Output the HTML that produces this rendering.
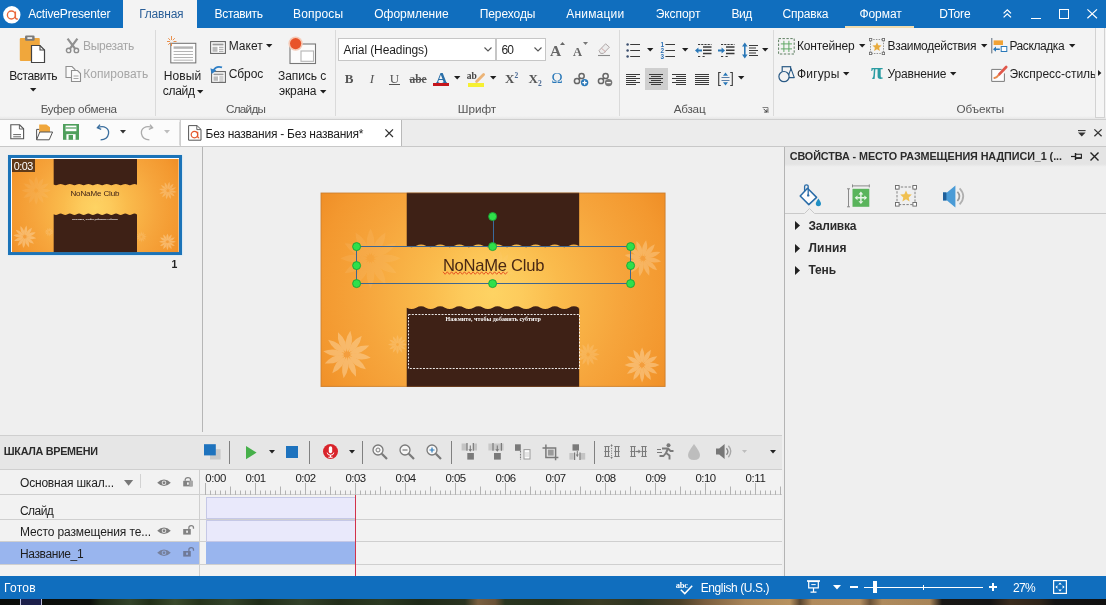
<!DOCTYPE html>
<html lang="ru"><head><meta charset="utf-8"><title>ActivePresenter</title>
<style>
html,body{margin:0;padding:0;}
body{width:1106px;height:605px;overflow:hidden;position:relative;background:#efefef;font-family:"Liberation Sans",sans-serif;font-size:12px;}
.r{position:absolute;}
.t{position:absolute;white-space:nowrap;line-height:normal;}
.i{position:absolute;overflow:visible;}
#w{position:absolute;left:0;top:0;width:1106px;height:605px;will-change:transform;}
</style></head><body><div id="w">

<div class="r" style="left:0px;top:0px;width:1106px;height:28px;background:#106ebe;"></div>
<svg class="i" style="left:2.5px;top:5.5px;" width="18" height="18" viewBox="0 0 18 18"><circle cx="8.8" cy="8.8" r="8.7" fill="#fff"/><circle cx="8.4" cy="9" r="4" fill="none" stroke="#e9683c" stroke-width="1.35"/><path d="M12.4 5.4V11.2Q12.4 13.2 14.8 13" fill="none" stroke="#e9683c" stroke-width="1.35"/></svg>
<span class="t" style="left:28.20px;top:7.00px;font-size:12px;color:#fff;letter-spacing:-0.174px;">ActivePresenter</span>
<div class="r" style="left:123px;top:0px;width:74px;height:28px;background:#f3f3f3;"></div>
<span class="t" style="left:139.20px;top:7.00px;font-size:12px;color:#2b5f98;letter-spacing:-0.211px;">Главная</span>
<span class="t" style="left:214.60px;top:7.00px;font-size:12px;color:#fff;letter-spacing:-0.358px;">Вставить</span>
<span class="t" style="left:293.00px;top:7.00px;font-size:12px;color:#fff;letter-spacing:0.150px;">Вопросы</span>
<span class="t" style="left:374.20px;top:7.00px;font-size:12px;color:#fff;letter-spacing:-0.009px;">Оформление</span>
<span class="t" style="left:479.70px;top:7.00px;font-size:12px;color:#fff;letter-spacing:-0.073px;">Переходы</span>
<span class="t" style="left:566.20px;top:7.00px;font-size:12px;color:#fff;letter-spacing:0.208px;">Анимации</span>
<span class="t" style="left:655.70px;top:7.00px;font-size:12px;color:#fff;letter-spacing:-0.056px;">Экспорт</span>
<span class="t" style="left:731.50px;top:7.00px;font-size:12px;color:#fff;letter-spacing:-0.437px;">Вид</span>
<span class="t" style="left:782.50px;top:7.00px;font-size:12px;color:#fff;letter-spacing:-0.196px;">Справка</span>
<span class="t" style="left:859.40px;top:7.00px;font-size:12px;color:#fff;letter-spacing:-0.038px;">Формат</span>
<span class="t" style="left:939.30px;top:7.00px;font-size:12px;color:#fff;letter-spacing:-0.182px;">DTore</span>
<div class="r" style="left:845px;top:26px;width:69px;height:2px;background:#f0dcae;"></div>
<svg class="i" style="left:1003px;top:9.3px;" width="9" height="9" viewBox="0 0 9 9"><path d="M0.6 4.4L4.3 0.8L8 4.4M0.6 8.4L4.3 4.8L8 8.4" fill="none" stroke="#fff" stroke-width="1.3"/></svg>
<div class="r" style="left:1031px;top:17.5px;width:10px;height:1.3px;background:#fff;"></div>
<div class="r" style="left:1058.6px;top:9.4px;width:8.2px;height:7.2px;background:transparent;border:1.2px solid #fff;box-sizing:content-box;"></div>
<svg class="i" style="left:1087px;top:9.4px;" width="10.4" height="9.6" viewBox="0 0 10.4 9.6"><path d="M0.4 0.4L10 9.2M10 0.4L0.4 9.2" stroke="#fff" stroke-width="1.2"/></svg>
<div class="r" style="left:0px;top:28px;width:1106px;height:92px;background:#f3f3f3;"></div>
<div class="r" style="left:0px;top:116px;width:1106px;height:3px;background:linear-gradient(#f3f3f3,#e6e6e6);"></div>
<div class="r" style="left:155px;top:30px;width:1px;height:86px;background:#dadada;"></div>
<div class="r" style="left:335px;top:30px;width:1px;height:86px;background:#dadada;"></div>
<div class="r" style="left:618.5px;top:30px;width:1px;height:86px;background:#dadada;"></div>
<div class="r" style="left:772.5px;top:30px;width:1px;height:86px;background:#dadada;"></div>
<span class="t" style="left:40.70px;top:102.00px;font-size:11.7px;color:#555;letter-spacing:-0.275px;">Буфер обмена</span>
<span class="t" style="left:226.00px;top:102.00px;font-size:11.7px;color:#555;letter-spacing:-0.726px;">Слайды</span>
<span class="t" style="left:457.70px;top:102.00px;font-size:11.7px;color:#555;letter-spacing:0.001px;">Шрифт</span>
<span class="t" style="left:673.70px;top:102.00px;font-size:11.7px;color:#555;letter-spacing:-0.224px;">Абзац</span>
<span class="t" style="left:956.60px;top:102.00px;font-size:11.7px;color:#555;letter-spacing:-0.093px;">Объекты</span>
<span class="t" style="left:9.20px;top:69.00px;font-size:12px;color:#1e1e1e;letter-spacing:-0.358px;">Вставить</span>
<svg class="i" style="left:29.8px;top:87.8px;" width="6.4" height="3.4" viewBox="0 0 6.4 3.4"><path d="M0 0H6.4L3.2 3.4Z" fill="#1e1e1e"/></svg>
<span class="t" style="left:83.00px;top:39.00px;font-size:12px;color:#a6a6a6;letter-spacing:-0.309px;">Вырезать</span>
<span class="t" style="left:83.20px;top:67.00px;font-size:12px;color:#a6a6a6;letter-spacing:0.039px;">Копировать</span>
<span class="t" style="left:163.70px;top:69.00px;font-size:12px;color:#1e1e1e;letter-spacing:0.131px;">Новый</span>
<span class="t" style="left:162.70px;top:84.00px;font-size:12px;color:#1e1e1e;letter-spacing:-0.276px;">слайд</span>
<svg class="i" style="left:196.8px;top:89.8px;" width="6.4" height="3.4" viewBox="0 0 6.4 3.4"><path d="M0 0H6.4L3.2 3.4Z" fill="#1e1e1e"/></svg>
<span class="t" style="left:228.70px;top:39.00px;font-size:12px;color:#1e1e1e;letter-spacing:0.007px;">Макет</span>
<svg class="i" style="left:265.8px;top:43.9px;" width="6.4" height="3.4" viewBox="0 0 6.4 3.4"><path d="M0 0H6.4L3.2 3.4Z" fill="#1e1e1e"/></svg>
<span class="t" style="left:228.70px;top:67.00px;font-size:12px;color:#1e1e1e;letter-spacing:-0.077px;">Сброс</span>
<span class="t" style="left:278.00px;top:69.00px;font-size:12px;color:#1e1e1e;letter-spacing:-0.064px;">Запись с</span>
<span class="t" style="left:279.00px;top:84.00px;font-size:12px;color:#1e1e1e;letter-spacing:-0.137px;">экрана</span>
<svg class="i" style="left:319.5px;top:89.8px;" width="6.4" height="3.4" viewBox="0 0 6.4 3.4"><path d="M0 0H6.4L3.2 3.4Z" fill="#1e1e1e"/></svg>
<svg class="i" style="left:18px;top:35px;" width="30" height="30" viewBox="0 0 30 30">
<rect x="1.8" y="3" width="20" height="23" rx="1" fill="#f0a73c"/>
<rect x="7" y="0.6" width="9.6" height="5.2" rx="1.2" fill="#7a7a7a"/>
<rect x="9.4" y="2.2" width="4.8" height="1.7" fill="#f3f3f3"/>
<path d="M13.5 10.5H22L26.5 15V27.5H13.5Z" fill="#fff" stroke="#444" stroke-width="1.2"/>
<path d="M22 10.5V15H26.5" fill="none" stroke="#444" stroke-width="1.1"/>
</svg>
<svg class="i" style="left:65px;top:38px;" width="15" height="16" viewBox="0 0 15 16">
<path d="M2.6 0.6L10.4 11.2M12.4 0.6L4.6 11.2" stroke="#909090" stroke-width="2.2" fill="none"/>
<circle cx="3.6" cy="12.4" r="2.2" fill="none" stroke="#8c8c8c" stroke-width="1.4"/>
<circle cx="11.4" cy="12.4" r="2.2" fill="none" stroke="#8c8c8c" stroke-width="1.4"/>
</svg>
<svg class="i" style="left:65px;top:65px;" width="17" height="18" viewBox="0 0 17 18">
<path d="M1 1.5H7L10 4.5V12.5H1Z" fill="#fafafa" stroke="#8f8f8f" stroke-width="1.1"/>
<path d="M6.5 5.5H12.5L15.5 8.5V16.5H6.5Z" fill="#fafafa" stroke="#8f8f8f" stroke-width="1.1"/>
<path d="M8.5 11H13.5M8.5 13.5H13.5" stroke="#a5a5a5" stroke-width="1"/>
</svg>
<svg class="i" style="left:166px;top:35px;" width="32" height="30" viewBox="0 0 32 30">
<rect x="4.8" y="8.3" width="25" height="19.6" fill="#fdfdfd" stroke="#6e6e6e" stroke-width="1"/>
<rect x="7.6" y="11.4" width="19.4" height="2.4" fill="#b4b4b4"/>
<path d="M7.6 16.5H27M7.6 19.5H27M7.6 22.5H27M7.6 25.2H27" stroke="#b4b4b4" stroke-width="1"/>
<path d="M5.5 1V5M5.5 8V11M1 6.5H4M7.5 6.5H10.5M2.3 3.2L4.2 5.2M8.8 3.2L6.8 5.2M2.3 9.8L4.2 7.8" stroke="#e8853a" stroke-width="0.9"/>
</svg>
<svg class="i" style="left:210px;top:41px;" width="16" height="13" viewBox="0 0 16 13">
<rect x="0.6" y="0.6" width="14.8" height="11.8" fill="#fff" stroke="#666" stroke-width="1.1"/>
<rect x="2.5" y="2.6" width="11" height="1.8" fill="#999"/>
<rect x="2.5" y="5.8" width="5" height="5" fill="#bbb"/>
<path d="M9 6.3H13.5M9 8.3H13.5M9 10.3H13.5" stroke="#999" stroke-width="0.9"/>
</svg>
<svg class="i" style="left:210px;top:66px;" width="16" height="17" viewBox="0 0 16 17">
<rect x="1.6" y="5.6" width="13.8" height="10.8" fill="#fff" stroke="#666" stroke-width="1.1"/>
<rect x="3.5" y="7.6" width="10" height="1.6" fill="#999"/>
<rect x="3.5" y="10.4" width="4.5" height="4.4" fill="#bbb"/>
<path d="M9.3 11H13.5M9.3 13H13.5M9.3 15H13.5" stroke="#999" stroke-width="0.9"/>
<path d="M12 1.4Q6 -0.4 3.6 4.4" fill="none" stroke="#2f7fc6" stroke-width="1.9"/>
<path d="M0.4 2.2L6.4 4.6L1.6 8Z" fill="#2f7fc6"/>
</svg>
<svg class="i" style="left:288px;top:36px;" width="30" height="30" viewBox="0 0 30 30">
<rect x="2" y="8" width="25.5" height="19.5" fill="#fbfbfb" stroke="#777" stroke-width="1.1"/>
<rect x="13" y="15" width="12.5" height="10.3" fill="#fff" stroke="#b5b5b5" stroke-width="1.1"/>
<circle cx="7.6" cy="7.6" r="7.2" fill="#f6c9b5"/>
<circle cx="7.6" cy="7.6" r="5.6" fill="#e8542a"/>
</svg>
<div class="r" style="left:338px;top:38px;width:157.5px;height:22.8px;background:#fff;border:1px solid #c6c6c6;box-sizing:border-box;"></div>
<div class="r" style="left:496.3px;top:38px;width:49.8px;height:22.8px;background:#fff;border:1px solid #c6c6c6;box-sizing:border-box;"></div>
<span class="t" style="left:343.50px;top:43.00px;font-size:12px;color:#1e1e1e;letter-spacing:-0.102px;">Arial (Headings)</span>
<span class="t" style="left:501.50px;top:43.00px;font-size:12px;color:#1e1e1e;letter-spacing:-0.824px;">60</span>
<svg class="i" style="left:483.5px;top:47px;" width="8" height="5" viewBox="0 0 8 5"><path d="M0.5 0.5L4 4L7.5 0.5" fill="none" stroke="#555" stroke-width="1.1"/></svg>
<svg class="i" style="left:533.5px;top:47px;" width="8" height="5" viewBox="0 0 8 5"><path d="M0.5 0.5L4 4L7.5 0.5" fill="none" stroke="#555" stroke-width="1.1"/></svg>
<span class="t" style="left:344.76px;top:71.00px;font-size:13px;color:#555;letter-spacing:0.000px;font-weight:700;font-family:'Liberation Serif',serif;">B</span>
<span class="t" style="left:369.74px;top:71.00px;font-size:13px;color:#555;letter-spacing:0.000px;font-family:'Liberation Serif',serif;font-style:italic;">I</span>
<span class="t" style="left:389.81px;top:71.00px;font-size:13px;color:#555;letter-spacing:0.000px;font-family:'Liberation Serif',serif;">U</span>
<div class="r" style="left:389.3px;top:83.8px;width:10.5px;height:1px;background:#555;"></div>
<span class="t" style="left:409.38px;top:73.00px;font-size:11.5px;color:#555;letter-spacing:0.000px;font-weight:700;font-family:'Liberation Serif',serif;text-decoration:line-through;text-decoration-thickness:1px;">abe</span>
<span class="t" style="left:436.00px;top:68.50px;font-size:15.5px;color:#2a6fa8;letter-spacing:0.000px;font-weight:700;font-family:'Liberation Serif',serif;">A</span>
<div class="r" style="left:433px;top:83.2px;width:15.8px;height:3.2px;background:#c4161c;"></div>
<svg class="i" style="left:454.40000000000003px;top:76.3px;" width="6.4" height="3.4" viewBox="0 0 6.4 3.4"><path d="M0 0H6.4L3.2 3.4Z" fill="#1e1e1e"/></svg>
<span class="t" style="left:466.78px;top:70.50px;font-size:9.5px;color:#444;letter-spacing:0.000px;font-weight:700;font-family:'Liberation Serif',serif;">ab</span>
<div class="r" style="left:468px;top:83.2px;width:16px;height:3.6px;background:#f6f032;"></div>
<svg class="i" style="left:474.5px;top:72.5px;" width="10" height="10" viewBox="0 0 10 10"><path d="M1.6 8.4L8.6 1.4" stroke="#ecb477" stroke-width="2.8" stroke-linecap="round"/></svg>
<svg class="i" style="left:489.8px;top:76.3px;" width="6.4" height="3.4" viewBox="0 0 6.4 3.4"><path d="M0 0H6.4L3.2 3.4Z" fill="#1e1e1e"/></svg>
<span class="t" style="left:505.01px;top:71.00px;font-size:13px;color:#555;letter-spacing:0.000px;font-weight:700;font-family:'Liberation Serif',serif;">X</span>
<span class="t" style="left:514.62px;top:70.80px;font-size:7.5px;color:#4a6a95;letter-spacing:0.000px;font-weight:700;font-family:'Liberation Serif',serif;">2</span>
<span class="t" style="left:528.51px;top:71.00px;font-size:13px;color:#555;letter-spacing:0.000px;font-weight:700;font-family:'Liberation Serif',serif;">X</span>
<span class="t" style="left:537.92px;top:79.00px;font-size:7.5px;color:#4a6a95;letter-spacing:0.000px;font-weight:700;font-family:'Liberation Serif',serif;">2</span>
<span class="t" style="left:551.43px;top:70.00px;font-size:15px;color:#2a78b8;letter-spacing:0.000px;font-family:'Liberation Serif',serif;">Ω</span>
<span class="t" style="left:550.10px;top:41.70px;font-size:15.5px;color:#666;letter-spacing:0.000px;font-weight:700;font-family:'Liberation Serif',serif;">A</span>
<svg class="i" style="left:560px;top:41.5px;" width="5" height="3" viewBox="0 0 5 3"><path d="M0 3L2.5 0L5 3Z" fill="#666"/></svg>
<span class="t" style="left:572.89px;top:44.70px;font-size:12.5px;color:#666;letter-spacing:0.000px;font-weight:700;font-family:'Liberation Serif',serif;">A</span>
<svg class="i" style="left:582.5px;top:41.8px;" width="5" height="3" viewBox="0 0 5 3"><path d="M0 0L2.5 3L5 0Z" fill="#777"/></svg>
<svg class="i" style="left:597px;top:42.5px;" width="14" height="14" viewBox="0 0 14 14"><path d="M2 7.6L8.6 0.8L12.4 4.2L6.4 10.4H3.6Z" fill="#ececec" stroke="#b0a8a8" stroke-width="1"/><path d="M4.4 5.2L8.8 9" stroke="#cfa8a8" stroke-width="1"/><path d="M1 12.5H13" stroke="#8a8a8a" stroke-width="1.1"/></svg>
<svg class="i" style="left:573px;top:71.5px;" width="16" height="15" viewBox="0 0 16 15">
<circle cx="4" cy="9" r="2.6" fill="none" stroke="#666" stroke-width="1.5"/>
<circle cx="8.6" cy="4" r="2.6" fill="none" stroke="#666" stroke-width="1.5"/>
<path d="M5.5 7.5L7.2 5.6" stroke="#666" stroke-width="1.5"/>
<circle cx="11.6" cy="10.6" r="3.7" fill="#2a78b8"/>
<path d="M9.4 10.6H13.8M11.6 8.4V12.8" stroke="#fff" stroke-width="1.3"/></svg>
<svg class="i" style="left:597px;top:71.5px;" width="16" height="15" viewBox="0 0 16 15">
<circle cx="4" cy="9" r="2.6" fill="none" stroke="#666" stroke-width="1.5"/>
<circle cx="8.6" cy="4" r="2.6" fill="none" stroke="#666" stroke-width="1.5"/>
<path d="M5.5 7.5L7.2 5.6" stroke="#666" stroke-width="1.5"/>
<circle cx="11.6" cy="10.6" r="3.7" fill="#777"/>
<path d="M9.4 10.6H13.8" stroke="#fff" stroke-width="1.3"/></svg>
<svg class="i" style="left:626px;top:42px;" width="15" height="17" viewBox="0 0 15 17"><circle cx="1.6" cy="2.5" r="1.25" fill="#3c4f6e"/><circle cx="1.6" cy="8.5" r="1.25" fill="#3c4f6e"/><circle cx="1.6" cy="14.5" r="1.25" fill="#3c4f6e"/>
<path d="M4.2 2.5H14M4.2 8.5H14M4.2 14.5H14" stroke="#3a3a3a" stroke-width="1"/></svg>
<svg class="i" style="left:646.8px;top:47.8px;" width="6.4" height="3.4" viewBox="0 0 6.4 3.4"><path d="M0 0H6.4L3.2 3.4Z" fill="#1e1e1e"/></svg>
<svg class="i" style="left:660px;top:42px;" width="16" height="17" viewBox="0 0 16 17"><path d="M5.4 2.5H15M5.4 8.5H15M5.4 14.5H15" stroke="#3a3a3a" stroke-width="1"/>
<text x="0.6" y="4.8" font-size="6.4" font-weight="700" fill="#2a6fb5" font-family="Liberation Sans,sans-serif">1</text>
<text x="0.6" y="10.8" font-size="6.4" font-weight="700" fill="#2a6fb5" font-family="Liberation Sans,sans-serif">2</text>
<text x="0.6" y="16.8" font-size="6.4" font-weight="700" fill="#2a6fb5" font-family="Liberation Sans,sans-serif">3</text></svg>
<svg class="i" style="left:681.8px;top:47.8px;" width="6.4" height="3.4" viewBox="0 0 6.4 3.4"><path d="M0 0H6.4L3.2 3.4Z" fill="#1e1e1e"/></svg>
<svg class="i" style="left:694.5px;top:42px;" width="17" height="17" viewBox="0 0 17 17"><path d="M3 2.5H16.5M3 14.5H6M7.5 14.5H10.5" stroke="#3a3a3a" stroke-width="1" stroke-dasharray="2.2 1"/>
<path d="M8 5H16.5M8 8.2H16.5M8 11.4H16.5" stroke="#3a3a3a" stroke-width="1.5"/>
<path d="M0 8.5L3.4 5.5V7.6H7V9.4H3.4V11.5Z" fill="#2a78b8"/></svg>
<svg class="i" style="left:718px;top:42px;" width="17" height="17" viewBox="0 0 17 17"><path d="M3 2.5H16.5M3 14.5H6M7.5 14.5H10.5" stroke="#3a3a3a" stroke-width="1" stroke-dasharray="2.2 1"/>
<path d="M8 5H16.5M8 8.2H16.5M8 11.4H16.5" stroke="#3a3a3a" stroke-width="1.5"/>
<path d="M7 8.5L3.6 5.5V7.6H0V9.4H3.6V11.5Z" fill="#2a78b8"/></svg>
<svg class="i" style="left:742px;top:42px;" width="17" height="17" viewBox="0 0 17 17"><path d="M7 3.5H16M7 6H14M7 8.5H16M7 11H14M7 13.5H16" stroke="#3a3a3a" stroke-width="1"/>
<path d="M2.8 3V14" stroke="#2a78b8" stroke-width="1.6"/><path d="M0 4.4L2.8 0.4L5.6 4.4ZM0 12.6L2.8 16.6L5.6 12.6Z" fill="#2a78b8"/></svg>
<svg class="i" style="left:761.8px;top:47.8px;" width="6.4" height="3.4" viewBox="0 0 6.4 3.4"><path d="M0 0H6.4L3.2 3.4Z" fill="#1e1e1e"/></svg>
<div class="r" style="left:645px;top:68px;width:23px;height:22px;background:#cfcfcf;"></div>
<svg class="i" style="left:626px;top:74px;" width="14" height="12" viewBox="0 0 14 12"><path d="M0 0.50H14M0 2.50H10M0 4.50H14M0 6.50H10M0 8.50H14M0 10.50H10" stroke="#3a3a3a" stroke-width="1"/></svg>
<svg class="i" style="left:649px;top:74px;" width="14" height="12" viewBox="0 0 14 12"><path d="M0 0.50H14M2 2.50H12M0 4.50H14M2 6.50H12M0 8.50H14M2 10.50H12" stroke="#3a3a3a" stroke-width="1"/></svg>
<svg class="i" style="left:672px;top:74px;" width="14" height="12" viewBox="0 0 14 12"><path d="M0 0.50H14M4 2.50H14M0 4.50H14M4 6.50H14M0 8.50H14M4 10.50H14" stroke="#3a3a3a" stroke-width="1"/></svg>
<svg class="i" style="left:695px;top:74px;" width="14" height="12" viewBox="0 0 14 12"><path d="M0 0.50H14M0 2.50H14M0 4.50H14M0 6.50H14M0 8.50H14M0 10.50H14" stroke="#3a3a3a" stroke-width="1"/></svg>
<svg class="i" style="left:718px;top:71px;" width="15" height="16" viewBox="0 0 15 16"><path d="M2.8 1.5H0.7V14.5H2.8M12.2 1.5H14.3V14.5H12.2" fill="none" stroke="#3a3a3a" stroke-width="1.1"/>
<path d="M3.5 6.5H11.5M3.5 9.5H11.5" stroke="#5a7fa8" stroke-width="1"/>
<path d="M5 4.8L7.5 1.6L10 4.8ZM5 11.2L7.5 14.4L10 11.2Z" fill="#2a78b8"/></svg>
<svg class="i" style="left:738.0999999999999px;top:76.3px;" width="6.4" height="3.4" viewBox="0 0 6.4 3.4"><path d="M0 0H6.4L3.2 3.4Z" fill="#1e1e1e"/></svg>
<svg class="i" style="left:761.5px;top:106.5px;" width="6.5" height="6.5" viewBox="0 0 6.5 6.5"><path d="M0.5 0.5H6V6" fill="none" stroke="#777" stroke-width="0.9"/><path d="M1.6 1.8L4.8 5M4.9 2.4V5.1H2.2" fill="none" stroke="#333" stroke-width="0.9"/></svg>
<span class="t" style="left:797.00px;top:39.00px;font-size:12px;color:#1e1e1e;letter-spacing:-0.156px;">Контейнер</span>
<svg class="i" style="left:859.0999999999999px;top:43.9px;" width="6.4" height="3.4" viewBox="0 0 6.4 3.4"><path d="M0 0H6.4L3.2 3.4Z" fill="#1e1e1e"/></svg>
<span class="t" style="left:887.50px;top:39.00px;font-size:12px;color:#1e1e1e;letter-spacing:-0.307px;">Взаимодействия</span>
<svg class="i" style="left:980.5999999999999px;top:43.9px;" width="6.4" height="3.4" viewBox="0 0 6.4 3.4"><path d="M0 0H6.4L3.2 3.4Z" fill="#1e1e1e"/></svg>
<span class="t" style="left:1009.40px;top:39.00px;font-size:12px;color:#1e1e1e;letter-spacing:-0.415px;">Раскладка</span>
<svg class="i" style="left:1068.5px;top:43.9px;" width="6.4" height="3.4" viewBox="0 0 6.4 3.4"><path d="M0 0H6.4L3.2 3.4Z" fill="#1e1e1e"/></svg>
<span class="t" style="left:797.00px;top:67.00px;font-size:12px;color:#1e1e1e;letter-spacing:0.189px;">Фигуры</span>
<svg class="i" style="left:843.0999999999999px;top:71.8px;" width="6.4" height="3.4" viewBox="0 0 6.4 3.4"><path d="M0 0H6.4L3.2 3.4Z" fill="#1e1e1e"/></svg>
<span class="t" style="left:887.50px;top:67.00px;font-size:12px;color:#1e1e1e;letter-spacing:-0.157px;">Уравнение</span>
<svg class="i" style="left:949.8px;top:71.8px;" width="6.4" height="3.4" viewBox="0 0 6.4 3.4"><path d="M0 0H6.4L3.2 3.4Z" fill="#1e1e1e"/></svg>
<span class="t" style="left:1009.40px;top:67.00px;font-size:12px;color:#1e1e1e;letter-spacing:-0.029px;">Экспресс-стиль</span>
<div class="r" style="left:1094.5px;top:28px;width:10.5px;height:90px;background:#f5f5f5;border:1px solid #d2d2d2;border-top:none;box-sizing:border-box;"></div>
<svg class="i" style="left:1098px;top:70px;" width="3.4" height="6" viewBox="0 0 3.4 6"><path d="M0 0L3.4 3L0 6Z" fill="#222"/></svg>
<svg class="i" style="left:778px;top:38px;" width="17" height="17" viewBox="0 0 17 17"><rect x="0.6" y="0.6" width="15.6" height="15.4" fill="none" stroke="#5f7f62" stroke-width="1" stroke-dasharray="2.4 1.5"/>
<path d="M5.9 2.8V14M10.9 2.8V14M2.8 5.9H14M2.8 10.9H14" stroke="#62a866" stroke-width="1"/></svg>
<svg class="i" style="left:869px;top:38px;" width="16" height="17" viewBox="0 0 16 17"><rect x="1.5" y="1.5" width="13" height="14" fill="none" stroke="#888" stroke-width="0.9" stroke-dasharray="1.5 1.2"/>
<path d="M8 4.2L9.3 7.3L12.6 7.6L10.1 9.8L10.9 13L8 11.3L5.1 13L5.9 9.8L3.4 7.6L6.7 7.3Z" fill="#e8ab3e"/>
<g fill="#fff" stroke="#666" stroke-width="0.8"><rect x="0.4" y="0.4" width="2.4" height="2.4"/><rect x="13.2" y="0.4" width="2.4" height="2.4"/><rect x="0.4" y="14.2" width="2.4" height="2.4"/><rect x="13.2" y="14.2" width="2.4" height="2.4"/></g></svg>
<svg class="i" style="left:991px;top:38px;" width="17" height="17" viewBox="0 0 17 17"><path d="M0.8 0V15.4" stroke="#5a6a7a" stroke-width="1"/>
<rect x="2.6" y="2.4" width="9.4" height="4.6" fill="#f0a235"/>
<rect x="10.2" y="8.5" width="5.6" height="5" fill="#fdfdfd" stroke="#2a78b8" stroke-width="1"/>
<path d="M2 11.2L5 8.6V10.5H8.8V11.9H5V13.8Z" fill="#2a78b8"/></svg>
<svg class="i" style="left:777.5px;top:66px;" width="17" height="16" viewBox="0 0 17 16"><rect x="4.2" y="0.7" width="8.4" height="7.6" fill="none" stroke="#2a5a85" stroke-width="1.2"/>
<path d="M13 2.6L16.3 11.6H9.6Z" fill="#f3f3f3" stroke="#2a5a85" stroke-width="1.1" stroke-linejoin="round"/>
<circle cx="6" cy="10.6" r="5.1" fill="#f3f3f3" stroke="#2a5a85" stroke-width="1.2"/></svg>
<span class="t" style="left:870.90px;top:58.40px;font-size:23.5px;color:#2a9ca2;letter-spacing:0.000px;font-weight:700;font-family:'Liberation Serif',serif;transform:scaleX(0.92);transform-origin:0 0;">π</span>
<svg class="i" style="left:991px;top:65px;" width="17" height="18" viewBox="0 0 17 18"><path d="M10.6 4.4H0.7V16.4H13.4V8.4" fill="#fdfdfd" stroke="#7a7a7a" stroke-width="1"/>
<path d="M15.2 2L8.2 9.4" stroke="#e0574a" stroke-width="2.7" stroke-linecap="round"/>
<path d="M7.4 10.3Q6 12.6 3.4 12.9" stroke="#e98a4e" stroke-width="2" stroke-linecap="round" fill="none"/></svg>
<div class="r" style="left:0px;top:120px;width:1106px;height:26px;background:#ececec;"></div>
<div class="r" style="left:0px;top:120px;width:179px;height:26px;background:#fbfbfb;"></div>
<div class="r" style="left:0px;top:119px;width:1106px;height:1px;background:#cfcfcf;"></div>
<div class="r" style="left:0px;top:146px;width:1106px;height:1px;background:#c8c8c8;"></div>
<div class="r" style="left:178.5px;top:122px;width:1px;height:23px;background:#d8d8d8;"></div>
<div class="r" style="left:180px;top:120px;width:222px;height:26px;background:#fff;border-left:1px solid #cfcfcf;border-right:1px solid #b9b9b9;box-sizing:border-box;"></div>
<svg class="i" style="left:9.5px;top:124px;" width="15" height="16" viewBox="0 0 15 16"><path d="M0.8 0.8H9.6L13.6 4.8V14.8H0.8Z" fill="#fff" stroke="#555" stroke-width="1.1"/><path d="M9.4 1V5H13.4" fill="none" stroke="#555" stroke-width="0.9"/><path d="M3.2 10.6H11M3.2 12.8H11" stroke="#666" stroke-width="1"/></svg>
<svg class="i" style="left:35.5px;top:123.5px;" width="17" height="16.5" viewBox="0 0 17 16.5"><path d="M3.2 0.4H10.4L14 3.2V9H3.2Z" fill="#f0a73c"/>
<path d="M0.6 15.8L3.8 8H16.6L13.2 15.8Z" fill="#fdfdfd" stroke="#555" stroke-width="1" stroke-linejoin="round"/>
<path d="M0.6 15.6V5.4H3.2" fill="none" stroke="#555" stroke-width="1"/></svg>
<svg class="i" style="left:63px;top:124px;" width="16" height="15.8" viewBox="0 0 16 15.8"><path d="M0 0H16V15.8H0Z" fill="#4f9f5c"/><rect x="2.6" y="1.6" width="10.8" height="5.6" fill="#fff"/><path d="M2.6 4H13.4" stroke="#4f9f5c" stroke-width="1.2"/><rect x="3.4" y="10.2" width="9.2" height="5.6" fill="#fff"/><rect x="5.6" y="11" width="4.4" height="4.8" fill="#4f9f5c"/></svg>
<svg class="i" style="left:96px;top:123.5px;" width="14" height="17" viewBox="0 0 14 17"><path d="M1.6 3.6C8.4 1 13.4 4.6 12.5 9.8C11.8 13.6 8.4 15.6 4.6 15.8" fill="none" stroke="#3a6e9e" stroke-width="1.3"/><path d="M4 0.6L1.4 3.8L5.2 5.4" fill="none" stroke="#3a6e9e" stroke-width="1.3"/></svg>
<svg class="i" style="left:120.2px;top:129.8px;" width="6" height="3.4" viewBox="0 0 6 3.4"><path d="M0 0H6L3.0 3.4Z" fill="#333"/></svg>
<svg class="i" style="left:140px;top:123.5px;" width="14" height="17" viewBox="0 0 14 17"><path d="M12.4 3.6C5.6 1 0.6 4.6 1.5 9.8C2.2 13.6 5.6 15.6 9.4 15.8" fill="none" stroke="#ababab" stroke-width="1.3"/><path d="M10 0.6L12.6 3.8L8.8 5.4" fill="none" stroke="#ababab" stroke-width="1.3"/></svg>
<svg class="i" style="left:164.4px;top:129.8px;" width="6" height="3.4" viewBox="0 0 6 3.4"><path d="M0 0H6L3.0 3.4Z" fill="#bdbdbd"/></svg>
<svg class="i" style="left:187.8px;top:124.8px;" width="14" height="16" viewBox="0 0 14 16"><path d="M0.6 0.6H9L13 4.4V15.2H0.6Z" fill="#fff" stroke="#555" stroke-width="1"/><path d="M8.8 0.8V4.6H12.8" fill="none" stroke="#555" stroke-width="0.9"/><circle cx="6.4" cy="9.6" r="3.2" fill="none" stroke="#e4572e" stroke-width="1.2"/><path d="M9.7 6.8V11.6Q9.7 13 11.2 13" fill="none" stroke="#e4572e" stroke-width="1.2"/></svg>
<span class="t" style="left:205.50px;top:126.50px;font-size:12px;color:#1e1e1e;letter-spacing:-0.239px;">Без названия - Без названия*</span>
<svg class="i" style="left:385px;top:128.8px;" width="8.4" height="8.4" viewBox="0 0 8.4 8.4"><path d="M0.4 0.4L8 8M8 0.4L0.4 8" stroke="#333" stroke-width="1.25"/></svg>
<svg class="i" style="left:1077.6px;top:129.6px;" width="7.6" height="6.6" viewBox="0 0 7.6 6.6"><path d="M0 0.6H7.6" stroke="#333" stroke-width="1.1"/><path d="M0 2.4H7.6L3.8 6.4Z" fill="#333"/></svg>
<svg class="i" style="left:1094px;top:129.2px;" width="8" height="7.6" viewBox="0 0 8 7.6"><path d="M0.4 0.4L7.6 7.2M7.6 0.4L0.4 7.2" stroke="#333" stroke-width="1.3"/></svg>
<svg width="0" height="0" style="position:absolute"><defs>
<radialGradient id="bg" cx="0.5" cy="0.52" r="0.6" gradientTransform="translate(0.5 0.52) scale(1 1.7) translate(-0.5 -0.52)">
<stop offset="0" stop-color="#fed363"/><stop offset="0.14" stop-color="#fdcb5c"/><stop offset="0.32" stop-color="#fabb4c"/><stop offset="0.62" stop-color="#f6a53c"/><stop offset="0.85" stop-color="#f3982f"/><stop offset="1" stop-color="#ee8c24"/></radialGradient>
<symbol id="slide" viewBox="0 0 345 195" preserveAspectRatio="none">
<rect width="345" height="195" fill="url(#bg)"/>
<g transform="translate(26.5 162.5) rotate(8)" opacity="0.5"><path d="M0 -24.00Q6.24 -12.00 0 -2.40Q-6.24 -12.00 0 -24.00Z" fill="#fcd6a2" transform="rotate(0.0)"/><path d="M0 -24.00Q6.24 -12.00 0 -2.40Q-6.24 -12.00 0 -24.00Z" fill="#fcd6a2" transform="rotate(30.0)"/><path d="M0 -24.00Q6.24 -12.00 0 -2.40Q-6.24 -12.00 0 -24.00Z" fill="#fcd6a2" transform="rotate(60.0)"/><path d="M0 -24.00Q6.24 -12.00 0 -2.40Q-6.24 -12.00 0 -24.00Z" fill="#fcd6a2" transform="rotate(90.0)"/><path d="M0 -24.00Q6.24 -12.00 0 -2.40Q-6.24 -12.00 0 -24.00Z" fill="#fcd6a2" transform="rotate(120.0)"/><path d="M0 -24.00Q6.24 -12.00 0 -2.40Q-6.24 -12.00 0 -24.00Z" fill="#fcd6a2" transform="rotate(150.0)"/><path d="M0 -24.00Q6.24 -12.00 0 -2.40Q-6.24 -12.00 0 -24.00Z" fill="#fcd6a2" transform="rotate(180.0)"/><path d="M0 -24.00Q6.24 -12.00 0 -2.40Q-6.24 -12.00 0 -24.00Z" fill="#fcd6a2" transform="rotate(210.0)"/><path d="M0 -24.00Q6.24 -12.00 0 -2.40Q-6.24 -12.00 0 -24.00Z" fill="#fcd6a2" transform="rotate(240.0)"/><path d="M0 -24.00Q6.24 -12.00 0 -2.40Q-6.24 -12.00 0 -24.00Z" fill="#fcd6a2" transform="rotate(270.0)"/><path d="M0 -24.00Q6.24 -12.00 0 -2.40Q-6.24 -12.00 0 -24.00Z" fill="#fcd6a2" transform="rotate(300.0)"/><path d="M0 -24.00Q6.24 -12.00 0 -2.40Q-6.24 -12.00 0 -24.00Z" fill="#fcd6a2" transform="rotate(330.0)"/><circle r="2.88" fill="#f3a04a"/></g>
<g transform="translate(321.5 173) rotate(0)" opacity="0.5"><path d="M0 -17.50Q4.55 -8.75 0 -1.75Q-4.55 -8.75 0 -17.50Z" fill="#fcd6a2" transform="rotate(0.0)"/><path d="M0 -17.50Q4.55 -8.75 0 -1.75Q-4.55 -8.75 0 -17.50Z" fill="#fcd6a2" transform="rotate(30.0)"/><path d="M0 -17.50Q4.55 -8.75 0 -1.75Q-4.55 -8.75 0 -17.50Z" fill="#fcd6a2" transform="rotate(60.0)"/><path d="M0 -17.50Q4.55 -8.75 0 -1.75Q-4.55 -8.75 0 -17.50Z" fill="#fcd6a2" transform="rotate(90.0)"/><path d="M0 -17.50Q4.55 -8.75 0 -1.75Q-4.55 -8.75 0 -17.50Z" fill="#fcd6a2" transform="rotate(120.0)"/><path d="M0 -17.50Q4.55 -8.75 0 -1.75Q-4.55 -8.75 0 -17.50Z" fill="#fcd6a2" transform="rotate(150.0)"/><path d="M0 -17.50Q4.55 -8.75 0 -1.75Q-4.55 -8.75 0 -17.50Z" fill="#fcd6a2" transform="rotate(180.0)"/><path d="M0 -17.50Q4.55 -8.75 0 -1.75Q-4.55 -8.75 0 -17.50Z" fill="#fcd6a2" transform="rotate(210.0)"/><path d="M0 -17.50Q4.55 -8.75 0 -1.75Q-4.55 -8.75 0 -17.50Z" fill="#fcd6a2" transform="rotate(240.0)"/><path d="M0 -17.50Q4.55 -8.75 0 -1.75Q-4.55 -8.75 0 -17.50Z" fill="#fcd6a2" transform="rotate(270.0)"/><path d="M0 -17.50Q4.55 -8.75 0 -1.75Q-4.55 -8.75 0 -17.50Z" fill="#fcd6a2" transform="rotate(300.0)"/><path d="M0 -17.50Q4.55 -8.75 0 -1.75Q-4.55 -8.75 0 -17.50Z" fill="#fcd6a2" transform="rotate(330.0)"/><circle r="2.10" fill="#f3a04a"/></g>
<g transform="translate(322.3 66) rotate(10)" opacity="0.4"><path d="M0 -18.50Q4.81 -9.25 0 -1.85Q-4.81 -9.25 0 -18.50Z" fill="#fcd6a2" transform="rotate(0.0)"/><path d="M0 -18.50Q4.81 -9.25 0 -1.85Q-4.81 -9.25 0 -18.50Z" fill="#fcd6a2" transform="rotate(30.0)"/><path d="M0 -18.50Q4.81 -9.25 0 -1.85Q-4.81 -9.25 0 -18.50Z" fill="#fcd6a2" transform="rotate(60.0)"/><path d="M0 -18.50Q4.81 -9.25 0 -1.85Q-4.81 -9.25 0 -18.50Z" fill="#fcd6a2" transform="rotate(90.0)"/><path d="M0 -18.50Q4.81 -9.25 0 -1.85Q-4.81 -9.25 0 -18.50Z" fill="#fcd6a2" transform="rotate(120.0)"/><path d="M0 -18.50Q4.81 -9.25 0 -1.85Q-4.81 -9.25 0 -18.50Z" fill="#fcd6a2" transform="rotate(150.0)"/><path d="M0 -18.50Q4.81 -9.25 0 -1.85Q-4.81 -9.25 0 -18.50Z" fill="#fcd6a2" transform="rotate(180.0)"/><path d="M0 -18.50Q4.81 -9.25 0 -1.85Q-4.81 -9.25 0 -18.50Z" fill="#fcd6a2" transform="rotate(210.0)"/><path d="M0 -18.50Q4.81 -9.25 0 -1.85Q-4.81 -9.25 0 -18.50Z" fill="#fcd6a2" transform="rotate(240.0)"/><path d="M0 -18.50Q4.81 -9.25 0 -1.85Q-4.81 -9.25 0 -18.50Z" fill="#fcd6a2" transform="rotate(270.0)"/><path d="M0 -18.50Q4.81 -9.25 0 -1.85Q-4.81 -9.25 0 -18.50Z" fill="#fcd6a2" transform="rotate(300.0)"/><path d="M0 -18.50Q4.81 -9.25 0 -1.85Q-4.81 -9.25 0 -18.50Z" fill="#fcd6a2" transform="rotate(330.0)"/><circle r="2.22" fill="#f3a04a"/></g>
<g transform="translate(50 66) rotate(0)" opacity="0.13"><path d="M0 -30.00Q7.80 -15.00 0 -3.00Q-7.80 -15.00 0 -30.00Z" fill="#fcd6a2" transform="rotate(0.0)"/><path d="M0 -30.00Q7.80 -15.00 0 -3.00Q-7.80 -15.00 0 -30.00Z" fill="#fcd6a2" transform="rotate(30.0)"/><path d="M0 -30.00Q7.80 -15.00 0 -3.00Q-7.80 -15.00 0 -30.00Z" fill="#fcd6a2" transform="rotate(60.0)"/><path d="M0 -30.00Q7.80 -15.00 0 -3.00Q-7.80 -15.00 0 -30.00Z" fill="#fcd6a2" transform="rotate(90.0)"/><path d="M0 -30.00Q7.80 -15.00 0 -3.00Q-7.80 -15.00 0 -30.00Z" fill="#fcd6a2" transform="rotate(120.0)"/><path d="M0 -30.00Q7.80 -15.00 0 -3.00Q-7.80 -15.00 0 -30.00Z" fill="#fcd6a2" transform="rotate(150.0)"/><path d="M0 -30.00Q7.80 -15.00 0 -3.00Q-7.80 -15.00 0 -30.00Z" fill="#fcd6a2" transform="rotate(180.0)"/><path d="M0 -30.00Q7.80 -15.00 0 -3.00Q-7.80 -15.00 0 -30.00Z" fill="#fcd6a2" transform="rotate(210.0)"/><path d="M0 -30.00Q7.80 -15.00 0 -3.00Q-7.80 -15.00 0 -30.00Z" fill="#fcd6a2" transform="rotate(240.0)"/><path d="M0 -30.00Q7.80 -15.00 0 -3.00Q-7.80 -15.00 0 -30.00Z" fill="#fcd6a2" transform="rotate(270.0)"/><path d="M0 -30.00Q7.80 -15.00 0 -3.00Q-7.80 -15.00 0 -30.00Z" fill="#fcd6a2" transform="rotate(300.0)"/><path d="M0 -30.00Q7.80 -15.00 0 -3.00Q-7.80 -15.00 0 -30.00Z" fill="#fcd6a2" transform="rotate(330.0)"/><circle r="3.60" fill="#f3a04a"/></g>
<g transform="translate(77 152.5) rotate(0)" opacity="0.3"><path d="M0 -9.50Q2.47 -4.75 0 -0.95Q-2.47 -4.75 0 -9.50Z" fill="#fcd6a2" transform="rotate(0.0)"/><path d="M0 -9.50Q2.47 -4.75 0 -0.95Q-2.47 -4.75 0 -9.50Z" fill="#fcd6a2" transform="rotate(30.0)"/><path d="M0 -9.50Q2.47 -4.75 0 -0.95Q-2.47 -4.75 0 -9.50Z" fill="#fcd6a2" transform="rotate(60.0)"/><path d="M0 -9.50Q2.47 -4.75 0 -0.95Q-2.47 -4.75 0 -9.50Z" fill="#fcd6a2" transform="rotate(90.0)"/><path d="M0 -9.50Q2.47 -4.75 0 -0.95Q-2.47 -4.75 0 -9.50Z" fill="#fcd6a2" transform="rotate(120.0)"/><path d="M0 -9.50Q2.47 -4.75 0 -0.95Q-2.47 -4.75 0 -9.50Z" fill="#fcd6a2" transform="rotate(150.0)"/><path d="M0 -9.50Q2.47 -4.75 0 -0.95Q-2.47 -4.75 0 -9.50Z" fill="#fcd6a2" transform="rotate(180.0)"/><path d="M0 -9.50Q2.47 -4.75 0 -0.95Q-2.47 -4.75 0 -9.50Z" fill="#fcd6a2" transform="rotate(210.0)"/><path d="M0 -9.50Q2.47 -4.75 0 -0.95Q-2.47 -4.75 0 -9.50Z" fill="#fcd6a2" transform="rotate(240.0)"/><path d="M0 -9.50Q2.47 -4.75 0 -0.95Q-2.47 -4.75 0 -9.50Z" fill="#fcd6a2" transform="rotate(270.0)"/><path d="M0 -9.50Q2.47 -4.75 0 -0.95Q-2.47 -4.75 0 -9.50Z" fill="#fcd6a2" transform="rotate(300.0)"/><path d="M0 -9.50Q2.47 -4.75 0 -0.95Q-2.47 -4.75 0 -9.50Z" fill="#fcd6a2" transform="rotate(330.0)"/><circle r="1.14" fill="#f3a04a"/></g>
<g transform="translate(267.5 162.5) rotate(0)" opacity="0.25"><path d="M0 -11.50Q2.99 -5.75 0 -1.15Q-2.99 -5.75 0 -11.50Z" fill="#fcd6a2" transform="rotate(0.0)"/><path d="M0 -11.50Q2.99 -5.75 0 -1.15Q-2.99 -5.75 0 -11.50Z" fill="#fcd6a2" transform="rotate(30.0)"/><path d="M0 -11.50Q2.99 -5.75 0 -1.15Q-2.99 -5.75 0 -11.50Z" fill="#fcd6a2" transform="rotate(60.0)"/><path d="M0 -11.50Q2.99 -5.75 0 -1.15Q-2.99 -5.75 0 -11.50Z" fill="#fcd6a2" transform="rotate(90.0)"/><path d="M0 -11.50Q2.99 -5.75 0 -1.15Q-2.99 -5.75 0 -11.50Z" fill="#fcd6a2" transform="rotate(120.0)"/><path d="M0 -11.50Q2.99 -5.75 0 -1.15Q-2.99 -5.75 0 -11.50Z" fill="#fcd6a2" transform="rotate(150.0)"/><path d="M0 -11.50Q2.99 -5.75 0 -1.15Q-2.99 -5.75 0 -11.50Z" fill="#fcd6a2" transform="rotate(180.0)"/><path d="M0 -11.50Q2.99 -5.75 0 -1.15Q-2.99 -5.75 0 -11.50Z" fill="#fcd6a2" transform="rotate(210.0)"/><path d="M0 -11.50Q2.99 -5.75 0 -1.15Q-2.99 -5.75 0 -11.50Z" fill="#fcd6a2" transform="rotate(240.0)"/><path d="M0 -11.50Q2.99 -5.75 0 -1.15Q-2.99 -5.75 0 -11.50Z" fill="#fcd6a2" transform="rotate(270.0)"/><path d="M0 -11.50Q2.99 -5.75 0 -1.15Q-2.99 -5.75 0 -11.50Z" fill="#fcd6a2" transform="rotate(300.0)"/><path d="M0 -11.50Q2.99 -5.75 0 -1.15Q-2.99 -5.75 0 -11.50Z" fill="#fcd6a2" transform="rotate(330.0)"/><circle r="1.38" fill="#f3a04a"/></g>
<g transform="translate(180 75) rotate(0)" opacity="0.08"><path d="M0 -16.00Q4.16 -8.00 0 -1.60Q-4.16 -8.00 0 -16.00Z" fill="#fcd6a2" transform="rotate(0.0)"/><path d="M0 -16.00Q4.16 -8.00 0 -1.60Q-4.16 -8.00 0 -16.00Z" fill="#fcd6a2" transform="rotate(30.0)"/><path d="M0 -16.00Q4.16 -8.00 0 -1.60Q-4.16 -8.00 0 -16.00Z" fill="#fcd6a2" transform="rotate(60.0)"/><path d="M0 -16.00Q4.16 -8.00 0 -1.60Q-4.16 -8.00 0 -16.00Z" fill="#fcd6a2" transform="rotate(90.0)"/><path d="M0 -16.00Q4.16 -8.00 0 -1.60Q-4.16 -8.00 0 -16.00Z" fill="#fcd6a2" transform="rotate(120.0)"/><path d="M0 -16.00Q4.16 -8.00 0 -1.60Q-4.16 -8.00 0 -16.00Z" fill="#fcd6a2" transform="rotate(150.0)"/><path d="M0 -16.00Q4.16 -8.00 0 -1.60Q-4.16 -8.00 0 -16.00Z" fill="#fcd6a2" transform="rotate(180.0)"/><path d="M0 -16.00Q4.16 -8.00 0 -1.60Q-4.16 -8.00 0 -16.00Z" fill="#fcd6a2" transform="rotate(210.0)"/><path d="M0 -16.00Q4.16 -8.00 0 -1.60Q-4.16 -8.00 0 -16.00Z" fill="#fcd6a2" transform="rotate(240.0)"/><path d="M0 -16.00Q4.16 -8.00 0 -1.60Q-4.16 -8.00 0 -16.00Z" fill="#fcd6a2" transform="rotate(270.0)"/><path d="M0 -16.00Q4.16 -8.00 0 -1.60Q-4.16 -8.00 0 -16.00Z" fill="#fcd6a2" transform="rotate(300.0)"/><path d="M0 -16.00Q4.16 -8.00 0 -1.60Q-4.16 -8.00 0 -16.00Z" fill="#fcd6a2" transform="rotate(330.0)"/><circle r="1.92" fill="#f3a04a"/></g>
<path d="M86.2 53.5Q90.97 56.30 95.75 53.5Q100.53 50.70 105.30 53.5Q110.07 56.30 114.85 53.5Q119.62 50.70 124.40 53.5Q129.17 56.30 133.95 53.5Q138.72 50.70 143.50 53.5Q148.28 56.30 153.05 53.5Q157.83 50.70 162.60 53.5Q167.38 56.30 172.15 53.5Q176.93 50.70 181.70 53.5Q186.48 56.30 191.25 53.5Q196.03 50.70 200.80 53.5Q205.58 56.30 210.35 53.5Q215.13 50.70 219.90 53.5Q224.68 56.30 229.45 53.5Q234.23 50.70 239.00 53.5Q243.78 56.30 248.55 53.5Q253.33 50.70 258.10 53.5Q258.35 56.30 258.60 53.5V0H86.2Z" fill="#3e2116"/>
<path d="M86.2 115.5Q90.97 118.30 95.75 115.5Q100.53 112.70 105.30 115.5Q110.07 118.30 114.85 115.5Q119.62 112.70 124.40 115.5Q129.17 118.30 133.95 115.5Q138.72 112.70 143.50 115.5Q148.28 118.30 153.05 115.5Q157.83 112.70 162.60 115.5Q167.38 118.30 172.15 115.5Q176.93 112.70 181.70 115.5Q186.48 118.30 191.25 115.5Q196.03 112.70 200.80 115.5Q205.58 118.30 210.35 115.5Q215.13 112.70 219.90 115.5Q224.68 118.30 229.45 115.5Q234.23 112.70 239.00 115.5Q243.78 118.30 248.55 115.5Q253.33 112.70 258.10 115.5Q258.35 118.30 258.60 115.5V195H86.2Z" fill="#3e2116"/>
</symbol></defs></svg>
<div class="r" style="left:202px;top:147px;width:1px;height:285px;background:#b6b6b6;"></div>
<div class="r" style="left:8.3px;top:155px;width:174.2px;height:100.4px;background:#fff;border:3.5px solid #1b73b8;box-sizing:border-box;box-shadow:0 0 1.5px 0.5px rgba(170,220,250,0.9);"></div>
<svg class="i" style="left:11.7px;top:158.7px" width="166.8" height="93.3" viewBox="0 0 345 195" preserveAspectRatio="none"><use href="#slide"/></svg>
<div class="r" style="left:11.7px;top:158.7px;width:23.6px;height:13.5px;background:rgba(62,36,20,0.82);"></div>
<span class="t" style="left:13.80px;top:159.50px;font-size:10.8px;color:#fff;letter-spacing:-0.480px;">0:03</span>
<span class="t" style="left:70.40px;top:189.20px;font-size:8px;color:#3e2116;letter-spacing:-0.113px;">NoNaMe Club</span>
<span class="t" style="left:71.80px;top:216.80px;font-size:2.9px;color:#fff;letter-spacing:0.021px;font-weight:700;font-family:'Liberation Serif',serif;">Нажмите, чтобы добавить субтитр</span>
<span class="t" style="left:171.60px;top:258.00px;font-size:10.5px;color:#222;letter-spacing:0.000px;font-weight:700;">1</span>
<svg class="i" style="left:320px;top:192px" width="347" height="196" viewBox="0 0 347 196"><use href="#slide" x="0.5" y="0.5" width="345.1" height="194.4"/><rect x="1" y="1" width="344.1" height="193.4" fill="none" stroke="#a86a30" stroke-opacity="0.45" stroke-width="1"/></svg>
<svg class="i" style="left:407.5px;top:313.6px;" width="172" height="55" viewBox="0 0 172 55"><rect x="0.5" y="0.5" width="171" height="54" fill="none" stroke="#fff" stroke-width="0.9" stroke-dasharray="2 1.3"/></svg>
<span class="t" style="left:445.60px;top:315.80px;font-size:6px;color:#fff;letter-spacing:0.038px;font-weight:700;font-family:'Liberation Serif',serif;">Нажмите, чтобы добавить субтитр</span>
<span class="t" style="left:442.90px;top:256.20px;font-size:16.6px;color:#4a2814;letter-spacing:-0.269px;">NoNaMe Club</span>
<svg class="i" style="left:442.5px;top:270.8px;" width="63" height="4" viewBox="0 0 63 4"><path d="M0 0.8l2.15 2.5l2.15 -2.5l2.15 2.5l2.15 -2.5l2.15 2.5l2.15 -2.5l2.15 2.5l2.15 -2.5l2.15 2.5l2.15 -2.5l2.15 2.5l2.15 -2.5l2.15 2.5l2.15 -2.5l2.15 2.5l2.15 -2.5l2.15 2.5l2.15 -2.5l2.15 2.5l2.15 -2.5l2.15 2.5l2.15 -2.5l2.15 2.5l2.15 -2.5l2.15 2.5l2.15 -2.5l2.15 2.5l2.15 -2.5l2.15 2.5l2.15 -2.5" fill="none" stroke="#e5481e" stroke-width="0.9"/></svg>
<div class="r" style="left:355.6px;top:246.4px;width:275.4px;height:37.6px;background:transparent;border:1.1px solid #3d6690;box-sizing:border-box;"></div>
<div class="r" style="left:492.5px;top:217px;width:1.2px;height:30px;background:#3a6a9c;"></div>
<svg class="i" style="left:351.59999999999997px;top:242.4px;" width="9.2" height="9.2" viewBox="0 0 9.2 9.2"><circle cx="4.6" cy="4.6" r="4" fill="#2fe04a" stroke="#1aa335" stroke-width="0.9"/></svg>
<svg class="i" style="left:488.4px;top:242.4px;" width="9.2" height="9.2" viewBox="0 0 9.2 9.2"><circle cx="4.6" cy="4.6" r="4" fill="#2fe04a" stroke="#1aa335" stroke-width="0.9"/></svg>
<svg class="i" style="left:625.8px;top:242.4px;" width="9.2" height="9.2" viewBox="0 0 9.2 9.2"><circle cx="4.6" cy="4.6" r="4" fill="#2fe04a" stroke="#1aa335" stroke-width="0.9"/></svg>
<svg class="i" style="left:351.59999999999997px;top:260.59999999999997px;" width="9.2" height="9.2" viewBox="0 0 9.2 9.2"><circle cx="4.6" cy="4.6" r="4" fill="#2fe04a" stroke="#1aa335" stroke-width="0.9"/></svg>
<svg class="i" style="left:625.8px;top:260.59999999999997px;" width="9.2" height="9.2" viewBox="0 0 9.2 9.2"><circle cx="4.6" cy="4.6" r="4" fill="#2fe04a" stroke="#1aa335" stroke-width="0.9"/></svg>
<svg class="i" style="left:351.59999999999997px;top:278.79999999999995px;" width="9.2" height="9.2" viewBox="0 0 9.2 9.2"><circle cx="4.6" cy="4.6" r="4" fill="#2fe04a" stroke="#1aa335" stroke-width="0.9"/></svg>
<svg class="i" style="left:488.4px;top:278.79999999999995px;" width="9.2" height="9.2" viewBox="0 0 9.2 9.2"><circle cx="4.6" cy="4.6" r="4" fill="#2fe04a" stroke="#1aa335" stroke-width="0.9"/></svg>
<svg class="i" style="left:625.8px;top:278.79999999999995px;" width="9.2" height="9.2" viewBox="0 0 9.2 9.2"><circle cx="4.6" cy="4.6" r="4" fill="#2fe04a" stroke="#1aa335" stroke-width="0.9"/></svg>
<svg class="i" style="left:488.4px;top:211.70000000000002px;" width="9.2" height="9.2" viewBox="0 0 9.2 9.2"><circle cx="4.6" cy="4.6" r="4" fill="#2fe04a" stroke="#1aa335" stroke-width="0.9"/></svg>
<div class="r" style="left:784px;top:147px;width:1px;height:429px;background:#b4b4b4;"></div>
<div class="r" style="left:785px;top:147px;width:321px;height:19.5px;background:linear-gradient(#e4e4e4 85%,#efefef);"></div>
<span class="t" style="left:789.70px;top:150.30px;font-size:10.8px;color:#2b2b2b;letter-spacing:-0.081px;font-weight:700;">СВОЙСТВА - МЕСТО РАЗМЕЩЕНИЯ НАДПИСИ_1 (...</span>
<svg class="i" style="left:1071px;top:152px;" width="11" height="9" viewBox="0 0 11 9"><path d="M0 4.5H4" stroke="#222" stroke-width="1.2"/><path d="M4.5 1V8" stroke="#222" stroke-width="1.4"/><path d="M4.5 2.2H10.4V6.2H4.5" fill="none" stroke="#222" stroke-width="1.1"/><path d="M4.5 6H10.4" stroke="#222" stroke-width="1.6"/></svg>
<svg class="i" style="left:1089.5px;top:152px;" width="9" height="9" viewBox="0 0 9 9"><path d="M0.5 0.5L8.5 8.5M8.5 0.5L0.5 8.5" stroke="#222" stroke-width="1.4"/></svg>
<svg class="i" style="left:785px;top:207px;" width="321" height="8" viewBox="0 0 321 8"><path d="M0 6.5H19.5L24.5 1.5L29.5 6.5H321" fill="none" stroke="#c9c9c9" stroke-width="1"/></svg>
<svg class="i" style="left:798px;top:184px;" width="24" height="24" viewBox="0 0 24 24"><path d="M9.5 4.2L18.6 13.4L10.8 20.6L2.2 12Z" fill="#fdfdfd" stroke="#2a6ca8" stroke-width="1.5" stroke-linejoin="round"/>
<path d="M10.2 11.2V2.6Q10.2 0.8 8.4 0.8Q6.6 0.8 6.6 2.6V7.2" fill="none" stroke="#2a6ca8" stroke-width="1.3"/>
<circle cx="10.2" cy="11.4" r="1.2" fill="#2a6ca8"/>
<path d="M20.4 14.6Q23 18.4 23 19.8Q23 22.2 20.4 22.2Q17.8 22.2 17.8 19.8Q17.8 18.4 20.4 14.6Z" fill="#1f8fc4"/></svg>
<svg class="i" style="left:847px;top:184px;" width="24" height="24" viewBox="0 0 24 24"><rect x="5.5" y="4.8" width="16.8" height="18" fill="#5ab45c"/>
<path d="M5.5 1.9H22.3M5.5 0.4V3.4M22.3 0.4V3.4M1.5 4.8V22.8M0 4.8H3M0 22.8H3" stroke="#8a8a8a" stroke-width="1"/>
<path d="M13.9 7.6L16.3 10.4H11.5ZM13.9 20L16.3 17.2H11.5ZM7.7 13.8L10.5 11.4V16.2ZM20.1 13.8L17.3 11.4V16.2Z" fill="#e9f5e9"/>
<path d="M13.9 10V17.6M10.2 13.8H17.6" stroke="#e9f5e9" stroke-width="1.4"/></svg>
<svg class="i" style="left:895px;top:185.4px;" width="22" height="22" viewBox="0 0 22 22"><rect x="2" y="2" width="18" height="17.6" fill="none" stroke="#777" stroke-width="0.9" stroke-dasharray="2.4 1.4"/>
<path d="M11 5.4L12.7 9.2L16.8 9.6L13.7 12.4L14.6 16.4L11 14.3L7.4 16.4L8.3 12.4L5.2 9.6L9.3 9.2Z" fill="#f0c050"/>
<g fill="#fff" stroke="#666" stroke-width="0.9"><rect x="0.5" y="0.5" width="3.6" height="3.6"/><rect x="17.9" y="0.5" width="3.6" height="3.6"/><rect x="0.5" y="17.5" width="3.6" height="3.6"/><rect x="17.9" y="17.5" width="3.6" height="3.6"/></g></svg>
<svg class="i" style="left:942.7px;top:185px;" width="24" height="23" viewBox="0 0 24 23"><path d="M0 7.4H4L12.4 0.4V22.4L4 15.4H0Z" fill="#4a9bd6"/>
<rect x="0" y="7.4" width="3.4" height="8" fill="#1f5f9a"/>
<path d="M14.4 6.8Q18.6 11.4 14.4 16" fill="none" stroke="#9a9a9a" stroke-width="1.7"/>
<path d="M16.6 3.4Q24 11.4 16.6 19.4" fill="none" stroke="#b0b0b0" stroke-width="1.7"/></svg>
<span class="t" style="left:808.50px;top:218.50px;font-size:12px;color:#2b2b2b;letter-spacing:-0.221px;font-weight:700;">Заливка</span>
<svg class="i" style="left:794.5px;top:221.0px;" width="5" height="9" viewBox="0 0 5 9"><path d="M0 0L5 4.5L0 9Z" fill="#222"/></svg>
<span class="t" style="left:808.50px;top:241.00px;font-size:12px;color:#2b2b2b;letter-spacing:0.175px;font-weight:700;">Линия</span>
<svg class="i" style="left:794.5px;top:243.5px;" width="5" height="9" viewBox="0 0 5 9"><path d="M0 0L5 4.5L0 9Z" fill="#222"/></svg>
<span class="t" style="left:808.50px;top:263.00px;font-size:12px;color:#2b2b2b;letter-spacing:-0.158px;font-weight:700;">Тень</span>
<svg class="i" style="left:794.5px;top:265.5px;" width="5" height="9" viewBox="0 0 5 9"><path d="M0 0L5 4.5L0 9Z" fill="#222"/></svg>
<div class="r" style="left:0px;top:435px;width:782px;height:1px;background:#cfcfcf;"></div>
<div class="r" style="left:0px;top:436px;width:782px;height:33px;background:#e6e6e6;"></div>
<div class="r" style="left:0px;top:469px;width:782px;height:1px;background:#cfcfcf;"></div>
<span class="t" style="left:3.80px;top:445.00px;font-size:10.8px;color:#2b2b2b;letter-spacing:-0.294px;font-weight:700;">ШКАЛА ВРЕМЕНИ</span>
<div class="r" style="left:0px;top:470px;width:782px;height:106px;background:#f2f2f2;"></div>
<div class="r" style="left:199px;top:470px;width:1px;height:106px;background:#cfcfcf;"></div>
<div class="r" style="left:0px;top:541.5px;width:199px;height:22.5px;background:#99b5ee;"></div>
<div class="r" style="left:0px;top:494px;width:782px;height:1px;background:#cfcfcf;"></div>
<div class="r" style="left:0px;top:519px;width:782px;height:1px;background:#cfcfcf;"></div>
<div class="r" style="left:0px;top:541px;width:782px;height:1px;background:#cfcfcf;"></div>
<div class="r" style="left:0px;top:564px;width:782px;height:1px;background:#cfcfcf;"></div>
<span class="t" style="left:20.00px;top:476.00px;font-size:12px;color:#1e1e1e;letter-spacing:-0.191px;">Основная шкал...</span>
<span class="t" style="left:20.00px;top:503.50px;font-size:12px;color:#1e1e1e;letter-spacing:-0.570px;">Слайд</span>
<span class="t" style="left:20.00px;top:525.00px;font-size:12px;color:#1e1e1e;letter-spacing:-0.115px;">Место размещения те...</span>
<span class="t" style="left:20.00px;top:547.00px;font-size:12px;color:#1e1e1e;letter-spacing:-0.377px;">Название_1</span>
<svg class="i" style="left:123.6px;top:479.6px;" width="9.2" height="5.8" viewBox="0 0 9.2 5.8"><path d="M0 0H9.2L4.6 5.8Z" fill="#777"/></svg>
<div class="r" style="left:140px;top:473.5px;width:1px;height:14px;background:#d2d2d2;"></div>
<svg class="i" style="left:156.8px;top:478.8px;" width="14" height="7.6" viewBox="0 0 14 7.6"><path d="M0.2 3.8Q7 -2.8 13.8 3.8Q7 10.4 0.2 3.8Z" fill="#7d7d7d"/><circle cx="7" cy="3.8" r="2.3" fill="#f2f2f2" opacity="0.85"/><circle cx="7" cy="3.8" r="1.3" fill="#7d7d7d"/></svg>
<svg class="i" style="left:183.2px;top:477.4px;" width="10" height="9.4" viewBox="0 0 10 9.4"><rect x="0.2" y="3.8" width="9.4" height="5.6" fill="#828282"/><rect x="6.4" y="3.8" width="3.2" height="5.6" fill="#a8a8a8"/><path d="M2.2 3.8V2.8Q2.2 0.7 4.9 0.7Q7.6 0.7 7.6 2.8V3.8" fill="none" stroke="#828282" stroke-width="1.3"/><rect x="4" y="5.4" width="1.8" height="2.3" fill="#f2f2f2"/></svg>
<svg class="i" style="left:156.8px;top:526.9000000000001px;" width="14" height="7.6" viewBox="0 0 14 7.6"><path d="M0.2 3.8Q7 -2.8 13.8 3.8Q7 10.4 0.2 3.8Z" fill="#7d7d7d"/><circle cx="7" cy="3.8" r="2.3" fill="#f2f2f2" opacity="0.85"/><circle cx="7" cy="3.8" r="1.3" fill="#7d7d7d"/></svg>
<svg class="i" style="left:183.2px;top:525.4000000000001px;" width="12.4" height="9.6" viewBox="0 0 12.4 9.6"><rect x="0.2" y="4" width="7.6" height="5.6" fill="#828282"/><path d="M5.9 4V2.8Q5.9 0.7 8.2 0.7Q10.5 0.7 10.5 2.8V3.8" fill="none" stroke="#828282" stroke-width="1.3"/><rect x="3.2" y="5.6" width="1.7" height="2.2" fill="#f2f2f2"/></svg>
<svg class="i" style="left:156.8px;top:548.8000000000001px;" width="14" height="7.6" viewBox="0 0 14 7.6"><path d="M0.2 3.8Q7 -2.8 13.8 3.8Q7 10.4 0.2 3.8Z" fill="#76809c"/><circle cx="7" cy="3.8" r="2.3" fill="#99b5ee" opacity="0.85"/><circle cx="7" cy="3.8" r="1.3" fill="#76809c"/></svg>
<svg class="i" style="left:183.2px;top:547.4000000000001px;" width="12.4" height="9.6" viewBox="0 0 12.4 9.6"><rect x="0.2" y="4" width="7.6" height="5.6" fill="#6f7a98"/><path d="M5.9 4V2.8Q5.9 0.7 8.2 0.7Q10.5 0.7 10.5 2.8V3.8" fill="none" stroke="#6f7a98" stroke-width="1.3"/><rect x="3.2" y="5.6" width="1.7" height="2.2" fill="#99b5ee"/></svg>
<svg class="i" style="left:205px;top:482.5px;" width="577" height="12" viewBox="0 0 577 12"><path d="M0.5 0V12M5.5 7.5V12M10.5 7.5V12M15.5 7.5V12M20.5 7.5V12M25.5 3.5V12M30.5 7.5V12M35.5 7.5V12M40.5 7.5V12M45.5 7.5V12M50.5 0V12M55.5 7.5V12M60.5 7.5V12M65.5 7.5V12M70.5 7.5V12M75.5 3.5V12M80.5 7.5V12M85.5 7.5V12M90.5 7.5V12M95.5 7.5V12M100.5 0V12M105.5 7.5V12M110.5 7.5V12M115.5 7.5V12M120.5 7.5V12M125.5 3.5V12M130.5 7.5V12M135.5 7.5V12M140.5 7.5V12M145.5 7.5V12M150.5 0V12M155.5 7.5V12M160.5 7.5V12M165.5 7.5V12M170.5 7.5V12M175.5 3.5V12M180.5 7.5V12M185.5 7.5V12M190.5 7.5V12M195.5 7.5V12M200.5 0V12M205.5 7.5V12M210.5 7.5V12M215.5 7.5V12M220.5 7.5V12M225.5 3.5V12M230.5 7.5V12M235.5 7.5V12M240.5 7.5V12M245.5 7.5V12M250.5 0V12M255.5 7.5V12M260.5 7.5V12M265.5 7.5V12M270.5 7.5V12M275.5 3.5V12M280.5 7.5V12M285.5 7.5V12M290.5 7.5V12M295.5 7.5V12M300.5 0V12M305.5 7.5V12M310.5 7.5V12M315.5 7.5V12M320.5 7.5V12M325.5 3.5V12M330.5 7.5V12M335.5 7.5V12M340.5 7.5V12M345.5 7.5V12M350.5 0V12M355.5 7.5V12M360.5 7.5V12M365.5 7.5V12M370.5 7.5V12M375.5 3.5V12M380.5 7.5V12M385.5 7.5V12M390.5 7.5V12M395.5 7.5V12M400.5 0V12M405.5 7.5V12M410.5 7.5V12M415.5 7.5V12M420.5 7.5V12M425.5 3.5V12M430.5 7.5V12M435.5 7.5V12M440.5 7.5V12M445.5 7.5V12M450.5 0V12M455.5 7.5V12M460.5 7.5V12M465.5 7.5V12M470.5 7.5V12M475.5 3.5V12M480.5 7.5V12M485.5 7.5V12M490.5 7.5V12M495.5 7.5V12M500.5 0V12M505.5 7.5V12M510.5 7.5V12M515.5 7.5V12M520.5 7.5V12M525.5 3.5V12M530.5 7.5V12M535.5 7.5V12M540.5 7.5V12M545.5 7.5V12M550.5 0V12M555.5 7.5V12M560.5 7.5V12M565.5 7.5V12M570.5 7.5V12M575.5 3.5V12" stroke="#b2b2b2" stroke-width="1" fill="none"/></svg>
<span class="t" style="left:205.20px;top:471.50px;font-size:11.4px;color:#222;letter-spacing:-0.372px;">0:00</span>
<span class="t" style="left:245.50px;top:471.50px;font-size:11.4px;color:#222;letter-spacing:-0.547px;">0:01</span>
<span class="t" style="left:295.50px;top:471.50px;font-size:11.4px;color:#222;letter-spacing:-0.547px;">0:02</span>
<span class="t" style="left:345.50px;top:471.50px;font-size:11.4px;color:#222;letter-spacing:-0.547px;">0:03</span>
<span class="t" style="left:395.50px;top:471.50px;font-size:11.4px;color:#222;letter-spacing:-0.547px;">0:04</span>
<span class="t" style="left:445.50px;top:471.50px;font-size:11.4px;color:#222;letter-spacing:-0.547px;">0:05</span>
<span class="t" style="left:495.50px;top:471.50px;font-size:11.4px;color:#222;letter-spacing:-0.547px;">0:06</span>
<span class="t" style="left:545.50px;top:471.50px;font-size:11.4px;color:#222;letter-spacing:-0.547px;">0:07</span>
<span class="t" style="left:595.50px;top:471.50px;font-size:11.4px;color:#222;letter-spacing:-0.547px;">0:08</span>
<span class="t" style="left:645.50px;top:471.50px;font-size:11.4px;color:#222;letter-spacing:-0.547px;">0:09</span>
<span class="t" style="left:695.50px;top:471.50px;font-size:11.4px;color:#222;letter-spacing:-0.547px;">0:10</span>
<span class="t" style="left:745.50px;top:471.50px;font-size:11.4px;color:#222;letter-spacing:-0.336px;">0:11</span>
<div class="r" style="left:205.5px;top:497px;width:150px;height:22.3px;background:#e9e9fb;border:1px solid #c5c8e6;box-sizing:border-box;"></div>
<div class="r" style="left:205.5px;top:519.5px;width:150px;height:22px;background:#e9e9fb;border:1px solid #c5c8e6;box-sizing:border-box;"></div>
<div class="r" style="left:205.5px;top:541.5px;width:150px;height:22.5px;background:#99b5ee;"></div>
<div class="r" style="left:355px;top:495px;width:1.2px;height:81px;background:#d2324b;"></div>
<svg class="i" style="left:203.5px;top:444px;" width="17" height="16" viewBox="0 0 17 16"><rect x="6" y="5.2" width="10.6" height="10.3" fill="#c9c9c9"/><rect x="0" y="0.2" width="11.8" height="11.2" fill="#1e73be"/></svg>
<div class="r" style="left:229px;top:441px;width:1px;height:22.5px;background:#808080;"></div>
<svg class="i" style="left:246px;top:445.8px;" width="10.6" height="13.2" viewBox="0 0 10.6 13.2"><path d="M0 0L10.6 6.6L0 13.2Z" fill="#46b04a"/></svg>
<svg class="i" style="left:268.6px;top:449.75px;" width="6" height="3.5" viewBox="0 0 6 3.5"><path d="M0 0H6L3.0 3.5Z" fill="#222"/></svg>
<svg class="i" style="left:286px;top:445.8px;" width="12" height="12" viewBox="0 0 12 12"><rect width="12" height="12" fill="#1e73be"/></svg>
<div class="r" style="left:309px;top:441px;width:1px;height:22.5px;background:#808080;"></div>
<svg class="i" style="left:323px;top:443.5px;" width="15" height="15" viewBox="0 0 15 15"><circle cx="7.5" cy="7.5" r="7.5" fill="#d9242b"/><rect x="5.8" y="2.2" width="3.4" height="7" rx="1.7" fill="#fff"/><path d="M4.2 8.6Q4.4 11.2 7.5 11.2Q10.6 11.2 10.8 8.6" fill="none" stroke="#fff" stroke-width="1"/><path d="M7.5 11V13M5.4 13.2H9.6" stroke="#fff" stroke-width="1.1"/></svg>
<svg class="i" style="left:348.5px;top:449.75px;" width="6" height="3.5" viewBox="0 0 6 3.5"><path d="M0 0H6L3.0 3.5Z" fill="#222"/></svg>
<div class="r" style="left:362px;top:441px;width:1px;height:22.5px;background:#808080;"></div>
<svg class="i" style="left:372.0px;top:444.0px;" width="16" height="16" viewBox="0 0 16 16"><circle cx="6" cy="6" r="5" fill="#f6f6f6" stroke="#7a7a7a" stroke-width="1.3"/><path d="M9.8 9.8L15 15" stroke="#7a7a7a" stroke-width="2.2"/><circle cx="6" cy="6" r="2" fill="none" stroke="#7a7a7a" stroke-width="1"/></svg>
<svg class="i" style="left:399.0px;top:444.0px;" width="16" height="16" viewBox="0 0 16 16"><circle cx="6" cy="6" r="5" fill="#f6f6f6" stroke="#7a7a7a" stroke-width="1.3"/><path d="M9.8 9.8L15 15" stroke="#7a7a7a" stroke-width="2.2"/><path d="M3.5 6H8.5" stroke="#7a7a7a" stroke-width="1.2"/></svg>
<svg class="i" style="left:426.0px;top:444.0px;" width="16" height="16" viewBox="0 0 16 16"><circle cx="6" cy="6" r="5" fill="#f6f6f6" stroke="#7a7a7a" stroke-width="1.3"/><path d="M9.8 9.8L15 15" stroke="#7a7a7a" stroke-width="2.2"/><path d="M3.5 6H8.5M6 3.5V8.5" stroke="#2a78b8" stroke-width="1.2"/></svg>
<div class="r" style="left:451px;top:441px;width:1px;height:22.5px;background:#808080;"></div>
<svg class="i" style="left:461px;top:443px;" width="17" height="17" viewBox="0 0 17 17"><rect x="0.6" y="0.5" width="5.6" height="7" fill="#c4c4c4"/><rect x="12" y="0.5" width="4" height="7" fill="#c4c4c4"/><path d="M6 0V7.8M12.3 0V7.8" stroke="#7a7a7a" stroke-width="1.2"/><path d="M9.3 2.5V8" stroke="#7a7a7a" stroke-width="1.1"/><path d="M7.4 6.2L9.3 8.8L11.2 6.2Z" fill="#7a7a7a"/><rect x="6.3" y="10" width="6.6" height="6.6" fill="#7a7a7a"/></svg>
<svg class="i" style="left:488px;top:443px;" width="17" height="17" viewBox="0 0 17 17"><rect x="0.4" y="0.5" width="15.2" height="7" fill="#c9c9c9"/><path d="M5 0V7.8M13.4 0V7.8" stroke="#7a7a7a" stroke-width="1.2"/><path d="M9.3 2.5V8" stroke="#7a7a7a" stroke-width="1.1"/><path d="M7.4 6.2L9.3 8.8L11.2 6.2Z" fill="#7a7a7a"/><rect x="6" y="10" width="6.8" height="6.6" fill="#7a7a7a"/></svg>
<svg class="i" style="left:515px;top:444px;" width="16" height="16" viewBox="0 0 16 16"><rect x="0" y="0.3" width="5.8" height="6.5" fill="#7a7a7a"/><path d="M5.5 7V16" stroke="#7a7a7a" stroke-width="1.1" stroke-dasharray="1.6 1.2"/><rect x="9" y="5.6" width="6" height="9.4" fill="#fdfdfd" stroke="#9a9a9a" stroke-width="1"/><path d="M11 8V13M13 8V13" stroke="#c0c0c0" stroke-width="0.8"/></svg>
<svg class="i" style="left:541.5px;top:443.5px;" width="17" height="17" viewBox="0 0 17 17"><path d="M3.9 0.5V13.6H16.4M0.5 3.9H13.6V16.2" fill="none" stroke="#7a7a7a" stroke-width="1.5"/><rect x="5.9" y="5.6" width="5.8" height="6" fill="#9a9a9a"/></svg>
<svg class="i" style="left:568.5px;top:444px;" width="17" height="16" viewBox="0 0 17 16"><rect x="3.5" y="0.3" width="6.5" height="6.3" fill="#7a7a7a"/><rect x="0.4" y="9" width="4.4" height="6.6" fill="#c4c4c4"/><rect x="11.4" y="9" width="4.8" height="6.6" fill="#c4c4c4"/><path d="M5.6 8.6V16M11 8.6V16" stroke="#7a7a7a" stroke-width="1.2"/><path d="M8.3 7V12.4" stroke="#7a7a7a" stroke-width="1"/><path d="M6.8 10.6L8.3 13L9.8 10.6Z" fill="#7a7a7a"/></svg>
<div class="r" style="left:594px;top:441px;width:1px;height:22.5px;background:#808080;"></div>
<svg class="i" style="left:604px;top:444.3px;" width="17" height="15" viewBox="0 0 17 15"><path d="M0.3 2.5H5.7M0.3 12.5H5.7M0.3 7.5H5.7M1.5 2.5V12.5M4.5 2.5V12.5" fill="none" stroke="#7a7a7a" stroke-width="1.1"/><path d="M10.3 2.5H15.700000000000001M10.3 12.5H15.700000000000001M10.3 7.5H15.700000000000001M11.5 2.5V12.5M14.5 2.5V12.5" fill="none" stroke="#7a7a7a" stroke-width="1.1"/><path d="M7.6 1.5V13.5" stroke="#7a7a7a" stroke-width="1" stroke-dasharray="1.2 1.2"/><path d="M6.4 2L7.6 0L8.8 2ZM6.4 13L7.6 15L8.8 13Z" fill="#7a7a7a"/></svg>
<svg class="i" style="left:630px;top:444.3px;" width="18" height="15" viewBox="0 0 18 15"><path d="M0.3 2.5H5.7M0.3 12.5H5.7M0.3 7.5H5.7M1.5 2.5V12.5M4.5 2.5V12.5" fill="none" stroke="#7a7a7a" stroke-width="1.1"/><path d="M11.3 2.5H16.700000000000003M11.3 12.5H16.700000000000003M11.3 7.5H16.700000000000003M12.5 2.5V12.5M15.5 2.5V12.5" fill="none" stroke="#7a7a7a" stroke-width="1.1"/><path d="M6 7.5H9" stroke="#7a7a7a" stroke-width="1.2"/><path d="M8.4 5.4L11 7.5L8.4 9.6Z" fill="#7a7a7a"/></svg>
<svg class="i" style="left:657px;top:443px;" width="17" height="17" viewBox="0 0 17 17"><circle cx="11.5" cy="2.2" r="2" fill="#7a7a7a"/><path d="M5 5.5H11L9 10L12.5 12.5V16.5M9 10L6.5 13H2.5M11 5.5L13.5 8H16.5" fill="none" stroke="#7a7a7a" stroke-width="1.9" stroke-linejoin="round"/><path d="M0 6.5H4M0 9.5H5" stroke="#7a7a7a" stroke-width="1"/></svg>
<svg class="i" style="left:688px;top:443.5px;" width="12" height="16" viewBox="0 0 12 16"><path d="M6 0Q12 8 12 11Q12 16 6 16Q0 16 0 11Q0 8 6 0Z" fill="#bdbdbd"/></svg>
<svg class="i" style="left:716px;top:444px;" width="17" height="15" viewBox="0 0 17 15"><path d="M0 4.5H3.2L8.6 0V15L3.2 10.5H0Z" fill="#777"/><path d="M10.4 4.2Q13.4 7.5 10.4 10.8" fill="none" stroke="#8a8a8a" stroke-width="1.4"/><path d="M12.4 1.8Q17.2 7.5 12.4 13.2" fill="none" stroke="#a8a8a8" stroke-width="1.4"/></svg>
<svg class="i" style="left:742.1px;top:450.0px;" width="5" height="3" viewBox="0 0 5 3"><path d="M0 0H5L2.5 3Z" fill="#bdbdbd"/></svg>
<svg class="i" style="left:770.0px;top:450.25px;" width="6" height="3.5" viewBox="0 0 6 3.5"><path d="M0 0H6L3.0 3.5Z" fill="#222"/></svg>
<div class="r" style="left:0px;top:576px;width:1106px;height:22.5px;background:#106ebe;"></div>
<span class="t" style="left:4.00px;top:580.50px;font-size:12px;color:#fff;letter-spacing:0.297px;">Готов</span>
<span class="t" style="left:700.70px;top:580.50px;font-size:12px;color:#fff;letter-spacing:-0.395px;">English (U.S.)</span>
<span class="t" style="left:675.80px;top:580.00px;font-size:8.6px;color:#fff;letter-spacing:-0.367px;font-weight:700;font-family:'Liberation Serif',serif;">abc</span>
<svg class="i" style="left:679.5px;top:584.5px;" width="13" height="10" viewBox="0 0 13 10"><path d="M0.8 4.8L4.8 8.6L12.2 0.8" fill="none" stroke="#fff" stroke-width="1.5"/></svg>
<svg class="i" style="left:807px;top:580px;" width="13" height="13" viewBox="0 0 13 13"><path d="M0 1H13" stroke="#fff" stroke-width="1.6"/><rect x="1.7" y="1.5" width="9.6" height="6.4" fill="none" stroke="#fff" stroke-width="1.2"/><path d="M4.3 4.6H8.7" stroke="#fff" stroke-width="1"/><path d="M6.5 8V11.8M3.5 12.2H9.5" stroke="#fff" stroke-width="1.2"/></svg>
<svg class="i" style="left:833.0px;top:584.75px;" width="8" height="4.5" viewBox="0 0 8 4.5"><path d="M0 0H8L4.0 4.5Z" fill="#fff"/></svg>
<div class="r" style="left:850px;top:586.3px;width:7.5px;height:1.8px;background:#fff;"></div>
<div class="r" style="left:864px;top:586.6px;width:118.5px;height:1px;background:#fff;"></div>
<div class="r" style="left:923.4px;top:584.5px;width:1px;height:5px;background:#fff;"></div>
<div class="r" style="left:873px;top:580.5px;width:4.2px;height:12.5px;background:#fff;"></div>
<div class="r" style="left:989px;top:586.3px;width:8.4px;height:1.8px;background:#fff;"></div>
<div class="r" style="left:992.3px;top:583px;width:1.8px;height:8.4px;background:#fff;"></div>
<span class="t" style="left:1013.00px;top:580.50px;font-size:12px;color:#fff;letter-spacing:-0.673px;">27%</span>
<svg class="i" style="left:1053px;top:580px;" width="14" height="14" viewBox="0 0 14 14"><rect x="0.6" y="0.6" width="12.8" height="12.8" fill="none" stroke="#fff" stroke-width="1.2"/><path d="M7 2.4L8.8 4.4H5.2ZM7 11.6L8.8 9.6H5.2ZM2.4 7L4.4 5.2V8.8ZM11.6 7L9.6 5.2V8.8Z" fill="#fff"/></svg>
<div class="r" style="left:0px;top:598.5px;width:1106px;height:6.5px;background:linear-gradient(90deg,#0a0c0a 0.00%,#0d100c 8.14%,#1e2a18 9.04%,#33442a 11.75%,#223018 13.56%,#3a4a2c 15.82%,#26341c 18.08%,#34442a 20.80%,#1f2c18 23.51%,#33422a 27.12%,#222e1a 30.74%,#2c3a22 34.36%,#1e2a18 37.97%,#2a3420 42.04%,#7a6040 43.22%,#6a5236 44.76%,#2a3620 45.66%,#26301c 50.00%,#3a3c24 54.25%,#2e3420 57.87%,#4a4028 61.48%,#7a5e3e 63.74%,#a88458 67.36%,#b8925f 71.43%,#5a4630 72.33%,#b08a5c 73.42%,#b48e60 77.76%,#6a5238 78.66%,#ae8a5c 79.75%,#a88458 84.09%,#1a1815 85.17%,#141414 89.51%,#3a2c1e 91.32%,#2e241a 94.03%,#141414 95.39%,#101010 100.00%);"></div>
<div class="r" style="left:20px;top:598.5px;width:21.5px;height:6.5px;background:#1c1f4a;border-left:1px solid #b9b9d9;border-right:1px solid #b9b9d9;box-sizing:border-box;"></div>
</div></body></html>
